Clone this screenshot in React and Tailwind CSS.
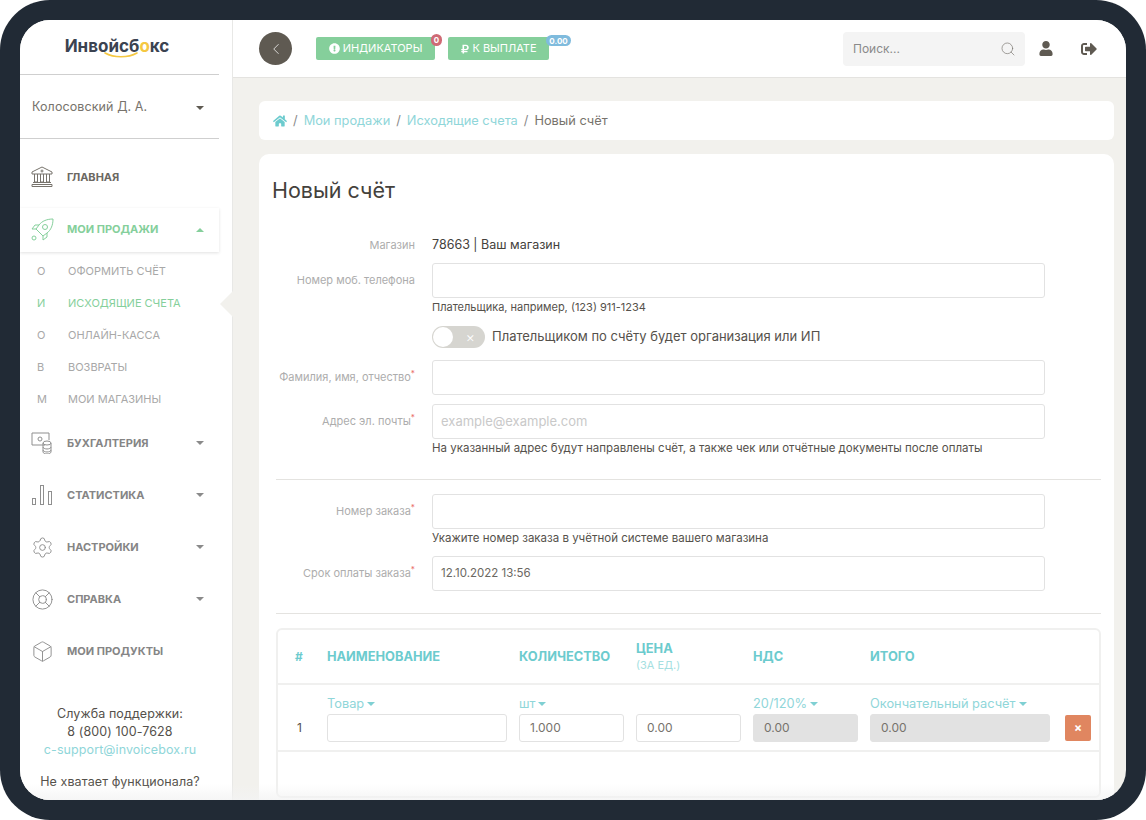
import React from 'react';
import { Box, ChevronLeft, LifeBuoy, Search, Settings } from 'lucide-react';
import { FaExclamationCircle, FaHome, FaRubleSign, FaSignOutAlt, FaUser } from 'react-icons/fa';

const Caret = ({ up, className = '' }) => (
  <span
    className={`inline-block h-0 w-0 border-x-[4px] border-x-transparent ${up ? 'border-b-[4px]' : 'border-t-[4px]'} ${className}`}
  />
);

const BankIcon = () => (
  <svg width="22" height="22" viewBox="0 0 22 22" fill="none" stroke="#77736c" strokeWidth="1">
    <path d="M11 1l10 5v2H1V6z" />
    <circle cx="11" cy="5" r="1" />
    <path d="M3.5 8v8h3V8M9.5 8v8h3V8M15.5 8v8h3V8" />
    <path d="M2 16.5h18M1 18.5h20v2H1z" />
  </svg>
);

const RocketIcon = () => (
  <svg width="23" height="23" viewBox="0 0 23 23" fill="none" stroke="#85cf9b" strokeWidth="1">
    <path d="M22 1c-6 0-11 2-14 6l-3 4 7 7 4-3c4-3 6-8 6-14z" />
    <circle cx="14" cy="9" r="2.5" />
    <path d="M8 7H4l-3 4h4M16 15v4l-4 3v-4" />
    <circle cx="3" cy="20" r="2" />
  </svg>
);

const AccountingIcon = () => (
  <svg width="22" height="22" viewBox="0 0 22 22" fill="none" stroke="#8f8f8f" strokeWidth="1">
    <path d="M14 13H1V1h17v7" />
    <circle cx="9" cy="7" r="2" />
    <ellipse cx="16" cy="11" rx="4" ry="2" />
    <path d="M12 11v9c0 1 2 2 4 2s4-1 4-2v-9M12 15c0 1 2 2 4 2s4-1 4-2M12 18c0 1 2 2 4 2s4-1 4-2" />
  </svg>
);

const BarsIcon = () => (
  <svg width="22" height="22" viewBox="0 0 22 22" fill="none" stroke="#8f8f8f" strokeWidth="1">
    <rect x="1.5" y="14.5" width="3" height="6" />
    <rect x="9.5" y="1.5" width="3" height="19" />
    <rect x="17.5" y="7.5" width="3" height="13" />
  </svg>
);

const MenuItem = ({ icon, label, caret, dark }) => (
  <div className="flex h-[52px] items-center pl-[11px] pr-[15px]">
    <span className="flex w-[36px] shrink-0 justify-start">{icon}</span>
    <span className={`flex-1 text-[11px] font-bold ${dark ? 'text-[#6b6862]' : 'text-[#858585]'}`}>{label}</span>
    {caret && <Caret className="border-t-[#8a8a8a]" />}
  </div>
);

const SubItem = ({ letter, label, active }) => (
  <div className={`flex h-[32px] items-center pt-[2px] text-[11px] ${active ? 'text-[#85cf9b]' : 'text-[#a8a8a8]'}`}>
    <span className="w-[48px] pl-[17px]">{letter}</span>
    <span>{label}</span>
  </div>
);

const Sidebar = () => (
  <aside className="relative w-[213px] shrink-0 border-r border-[#e8e8e6] bg-white">
    <div className="w-[199px]">
      <div className="flex h-[55px] flex-col items-center justify-center border-b border-[#cfcfcf] pr-[5px]">
        <span className="text-[17px] font-bold leading-[18px] text-[#3b4351]">
          Инвойсб<span className="text-[#f5c842]">о</span>кс
        </span>
        <svg width="34" height="6" viewBox="0 0 34 6" fill="none" className="-mt-[3px] ml-[8px]">
          <path d="M1 1c9 5 23 5 32 0" stroke="#f5c842" strokeWidth="1.6" strokeLinecap="round" />
        </svg>
      </div>
      <div className="flex h-[64px] items-center justify-between border-b border-[#cfcfcf] pl-[12px] pr-[15px] pt-[2px] text-[12.5px] tracking-[0.1px] text-[#77736c]">
        <span>Колосовский Д. А.</span>
        <Caret className="border-t-[#5f5a52]" />
      </div>
      <div className="pt-[12px]">
        <MenuItem dark label="ГЛАВНАЯ" icon={<BankIcon />} />
        <div className="flex h-[51px] items-center pt-[2px]">
          <div className="flex h-[44px] w-full items-center bg-white pl-[11px] pr-[15px] shadow-[0_1px_3px_rgba(0,0,0,0.12)]">
            <span className="w-[36px]"><RocketIcon /></span>
            <span className="flex-1 text-[11px] font-bold text-[#85cf9b]">МОИ ПРОДАЖИ</span>
            <Caret up className="border-b-[#85cf9b]" />
          </div>
        </div>
        <div className="mb-[3px]">
          <SubItem letter="О" label="ОФОРМИТЬ СЧЁТ" />
          <SubItem letter="И" label="ИСХОДЯЩИЕ СЧЕТА" active />
          <SubItem letter="О" label="ОНЛАЙН-КАССА" />
          <SubItem letter="В" label="ВОЗВРАТЫ" />
          <SubItem letter="М" label="МОИ МАГАЗИНЫ" />
        </div>
        <MenuItem label="БУХГАЛТЕРИЯ" caret icon={<AccountingIcon />} />
        <MenuItem label="СТАТИСТИКА" caret icon={<BarsIcon />} />
        <MenuItem label="НАСТРОЙКИ" caret icon={<Settings size={23} strokeWidth={1} color="#8f8f8f" />} />
        <MenuItem label="СПРАВКА" caret icon={<LifeBuoy size={23} strokeWidth={1} color="#8f8f8f" />} />
        <MenuItem label="МОИ ПРОДУКТЫ" icon={<Box size={23} strokeWidth={1} color="#8f8f8f" />} />
      </div>
      <div className="mt-[28px] pl-[1px] text-center text-[12.5px] leading-[18px] tracking-[0.1px] text-[#55514b]">
        <div>Служба поддержки:</div>
        <div>8 (800) 100-7628</div>
        <div className="text-[#8fd6d9]">c-support@invoicebox.ru</div>
        <div className="mt-[14px]">Не хватает функционала?</div>
      </div>
    </div>
    {/* notch pointing at the active sub item */}
    <span className="absolute right-[-1px] top-[271px] h-0 w-0 border-y-[13px] border-r-[13px] border-y-transparent border-r-[#f2f1ed]" />
  </aside>
);

const Header = () => (
  <header className="flex h-[58px] shrink-0 items-center border-b border-[#e4e3e0] bg-white pl-[26px] pr-[29px]">
    <button className="flex h-[33px] w-[33px] items-center justify-center rounded-full bg-[#5f5a52]">
      <ChevronLeft size={18} strokeWidth={1} color="#fff" />
    </button>
    <button className="relative ml-[24px] flex h-[23px] w-[119px] items-center justify-center gap-[3px] rounded-[2px] bg-[#85cf9b] text-[11px] text-white">
      <FaExclamationCircle size={11} />
      ИНДИКАТОРЫ
      <span className="absolute right-[-7px] top-[-3px] flex h-[12px] w-[11px] items-center justify-center rounded-full bg-[#cf6a75] text-[8px] font-bold">0</span>
    </button>
    <button className="relative ml-[13px] flex h-[23px] w-[101px] items-center justify-center gap-[2px] rounded-[2px] bg-[#85cf9b] text-[11px] text-white">
      <FaRubleSign size={10} />
      К ВЫПЛАТЕ
      <span className="absolute right-[-22px] top-[-2px] flex h-[11px] w-[25px] items-center justify-center rounded-full bg-[#7fbbdd] text-[8px] font-bold">0.00</span>
    </button>
    <div className="ml-auto flex h-[34px] w-[182px] items-center justify-between rounded-[4px] bg-[#f4f4f4] pl-[10px] pr-[9px] text-[12px] text-[#8a8a8a]">
      <span>Поиск...</span>
      <Search size={16} strokeWidth={1} color="#77736c" />
    </div>
    <span className="ml-[14px] flex w-[14px] justify-center"><FaUser size={15} color="#5f5a52" /></span>
    <span className="ml-[28px] flex w-[16px] justify-center"><FaSignOutAlt size={16} color="#5f5a52" /></span>
  </header>
);

const Field = ({ label, required, placeholder, value, hint, hintSize = 'text-[11.5px]', className = '' }) => (
  <div className={`flex ${className}`}>
    <label className="mr-[17px] w-[156px] shrink-0 pt-[10px] text-right text-[11px] leading-[14px] text-[#adadad]">
      {label}
      {required && <sup className="text-[#e86a6a]">*</sup>}
    </label>
    <div className="w-[613px]">
      <div className={`flex h-[35px] items-center rounded-[3px] border border-[#e2e2e2] bg-white pl-[8px] ${placeholder ? 'text-[13px] text-[#c9c9c9]' : 'text-[11.5px] text-[#6b6862]'}`}>
        {placeholder || value}
      </div>
      {hint && <div className={`leading-[18px] text-[#55514b] ${hintSize}`}>{hint}</div>}
    </div>
  </div>
);

const TableCell = ({ width, label, value, disabled }) => (
  <div className={`shrink-0 ${width}`}>
    <div className="flex h-[20px] items-center gap-[3px] text-[12.8px] text-[#8fd6d9]">
      {label}
      {label && <Caret className="border-t-[#7fd0d3]" />}
    </div>
    <div className={`flex h-[28px] items-center rounded-[3px] border border-[#e2e2e2] pl-[10px] text-[12px] text-[#77736c] ${disabled ? 'bg-[#e2e2e2]' : 'bg-white'}`}>
      {value}
    </div>
  </div>
);

const ItemsTable = () => (
  <div className="ml-[17px] mr-[13px] mt-[14px] h-[170px] rounded-[6px] border-2 border-[#f0f0ef]">
    <div className="flex h-[55px] items-center border-b-2 border-[#f0f0ef] text-[12.8px] font-bold text-[#6ccbce]">
      <span className="w-[49px] pl-[17px] text-[12px]">#</span>
      <span className="w-[192px]">НАИМЕНОВАНИЕ</span>
      <span className="w-[117px]">КОЛИЧЕСТВО</span>
      <span className="w-[117px] leading-[17px]">
        ЦЕНА
        <span className="block text-[11px] font-normal text-[#a5dfe1]">(ЗА ЕД.)</span>
      </span>
      <span className="w-[117px]">НДС</span>
      <span>ИТОГО</span>
    </div>
    <div className="flex h-[67px] items-start gap-[12px] border-b-2 border-[#f0f0ef] pt-[9px]">
      <span className="-mr-[12px] w-[49px] shrink-0 pl-[19px] pt-[20px] text-[12px] leading-[28px] text-[#55514b]">1</span>
      <TableCell width="w-[180px]" label="Товар" />
      <TableCell width="w-[105px]" label="шт" value="1.000" />
      <TableCell width="w-[105px]" value="0.00" />
      <TableCell width="w-[105px]" label="20/120%" value="0.00" disabled />
      <TableCell width="w-[180px]" label="Окончательный расчёт" value="0.00" disabled />
      <button className="ml-[3px] mt-[21px] flex h-[26px] w-[26px] items-center justify-center rounded-[2px] bg-[#e08660] text-[12px] font-bold leading-none text-white">
        ×
      </button>
    </div>
  </div>
);

const InvoiceForm = () => (
  <section className="mx-[26px] mr-[12px] mt-[14px] flex-1 rounded-t-[10px] bg-white">
    <h1 className="pl-[13px] pt-[22px] text-[21.5px] leading-[28px] text-[#44413c]">Новый счёт</h1>
    <div className="mt-[32px] flex h-[18px] items-center">
      <span className="mr-[17px] w-[156px] text-right text-[11px] text-[#adadad]">Магазин</span>
      <span className="text-[12.5px] text-[#44413c]">78663 | Ваш магазин</span>
    </div>
    <Field className="mt-[9px]" label="Номер моб. телефона" hintSize="text-[11px]" hint="Плательщика, например, (123) 911-1234" />
    <div className="ml-[173px] mt-[9px] flex h-[23px] items-center gap-[7px]">
      <span className="flex h-[22px] w-[53px] items-center justify-between rounded-full bg-[#d6d5d0] pl-[1px] pr-[10px]">
        <span className="h-[20px] w-[20px] rounded-full bg-white" />
        <span className="text-[14px] font-light leading-none text-white">×</span>
      </span>
      <span className="text-[13px] text-[#55514b]">Плательщиком по счёту будет организация или ИП</span>
    </div>
    <Field className="mt-[12px]" label="Фамилия, имя, отчество" required />
    <Field
      className="mt-[9px]"
      label="Адрес эл. почты"
      required
      placeholder="example@example.com"
      hint="На указанный адрес будут направлены счёт, а также чек или отчётные документы после оплаты"
    />
    <div className="ml-[17px] mr-[13px] mt-[22px] border-t border-[#e4e3e0]" />
    <Field className="mt-[14px]" label="Номер заказа" required hint="Укажите номер заказа в учётной системе вашего магазина" />
    <Field className="mt-[9px]" label="Срок оплаты заказа" required value="12.10.2022 13:56" />
    <div className="ml-[17px] mr-[13px] mt-[22px] border-t border-[#e4e3e0]" />
    <ItemsTable />
  </section>
);

export default function App() {
  return (
    <div className="h-[820px] w-[1146px] overflow-hidden bg-white font-['Inter','Noto_Sans',sans-serif]">
      <div className="h-full rounded-[50px] bg-[#212a35] p-[20px]">
        <div className="relative flex h-[780px] overflow-hidden rounded-[30px] bg-[#f2f1ed]">
          <Sidebar />
          <div className="flex min-w-0 flex-1 flex-col">
            <Header />
            <nav className="ml-[26px] mr-[12px] mt-[23px] flex h-[39px] shrink-0 items-center gap-[6px] rounded-[6px] bg-white pl-[14px] text-[12.8px] text-[#8a8a8a]">
              <FaHome size={14} color="#6ccbce" />
              <span>/</span>
              <span className="text-[#8fd6d9]">Мои продажи</span>
              <span>/</span>
              <span className="text-[#8fd6d9]">Исходящие счета</span>
              <span>/</span>
              <span className="text-[#77736c]">Новый счёт</span>
            </nav>
            <InvoiceForm />
          </div>
          {/* soft fade over the bottom edge */}
          <div className="pointer-events-none absolute inset-x-0 bottom-0 h-[16px] bg-gradient-to-b from-white/0 to-[#f3f3f3]/80" />
        </div>
      </div>
    </div>
  );
}
